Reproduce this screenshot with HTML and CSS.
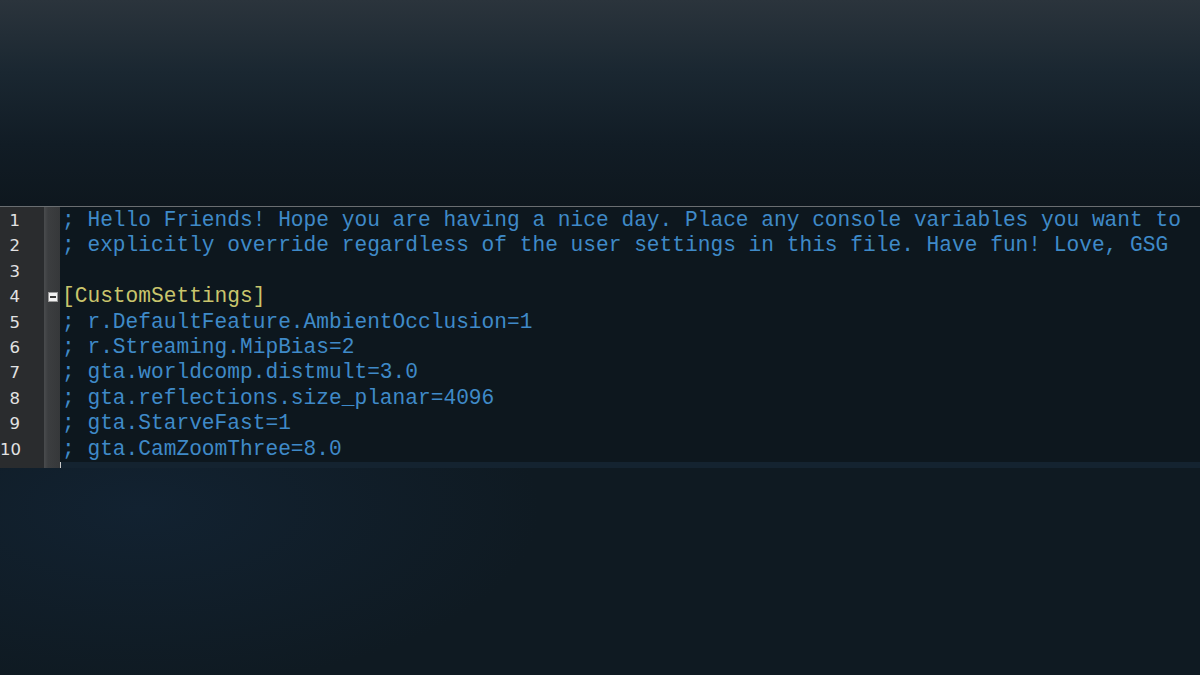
FILE: index.html
```html
<!DOCTYPE html>
<html lang="en">
<head>
    <meta charset="UTF-8">
    <meta name="viewport" content="width=device-width, initial-scale=1.0">
    <title>Custom Settings</title>
    <link rel="stylesheet" href="styles.css">
</head>
<body>

<div class="top"></div>

<div class="editor">
    <!-- Line numbers -->
    <div class="gutter">
        <div class="num">1</div>
        <div class="num">2</div>
        <div class="num">3</div>
        <div class="num">4</div>
        <div class="num">5</div>
        <div class="num">6</div>
        <div class="num">7</div>
        <div class="num">8</div>
        <div class="num">9</div>
        <div class="num">10</div>
    </div>

    <!-- Fold margin -->
    <div class="fold">
        <div class="fold-row"></div>
        <div class="fold-row"></div>
        <div class="fold-row"></div>
        <div class="fold-row"><span class="fold-box"></span></div>
    </div>

    <!-- Code -->
    <div class="code">
        <div class="line comment">; Hello Friends! Hope you are having a nice day. Place any console variables you want to</div>
        <div class="line comment">; explicitly override regardless of the user settings in this file. Have fun! Love, GSG</div>
        <div class="line"></div>
        <div class="line section">[CustomSettings]</div>
        <div class="line comment">; r.DefaultFeature.AmbientOcclusion=1</div>
        <div class="line comment">; r.Streaming.MipBias=2</div>
        <div class="line comment">; gta.worldcomp.distmult=3.0</div>
        <div class="line comment">; gta.reflections.size_planar=4096</div>
        <div class="line comment">; gta.StarveFast=1</div>
        <div class="line comment">; gta.CamZoomThree=8.0</div>
        <div class="end-tick"></div>
    </div>
</div>

<div class="bottom"></div>

</body>
</html>
```

FILE: styles.css
```css
/* Page */
body {
    margin: 0;
    background-color: #0f1a22;
    overflow: hidden;
}

/* Dark banner above the editor */
.top {
    height: 206px;
    background: linear-gradient(to bottom, #2b343c 0%, #1a2731 35%, #111c25 70%, #0e171e 100%);
    border-bottom: 1px solid #6a6e71;
}

/* Editor */
.editor {
    display: flex;
    height: 261px;
    background-color: #0d171e;
}

.gutter {
    width: 44px;
    padding-top: 1px;
    background-color: #2a2c2e;
    box-sizing: border-box;
    padding-right: 24px;
}

.num {
    height: 25.4px;
    line-height: 25.4px;
    text-align: right;
    font-family: "DejaVu Sans", Verdana, sans-serif;
    font-size: 16.5px;
    color: #e2e2e2;
}

.fold {
    width: 16px;
    padding-top: 1px;
    background: linear-gradient(to right, #4a4c4e 0px, #3c3e40 4px, #36383a 100%);
}

.fold-row {
    height: 25.4px;
    display: flex;
    align-items: center;
    justify-content: center;
}

/* Fold marker [-] */
.fold-box {
    position: relative;
    width: 10px;
    height: 10px;
    margin-left: 2px;
    background-color: #f2f2f2;
    box-sizing: border-box;
    border: 1px solid #9a9a9a;
}

.fold-box::after {
    content: "";
    position: absolute;
    left: 1px;
    right: 1px;
    top: 3px;
    height: 2px;
    background-color: #3a3a3a;
}

.code {
    position: relative;
    flex: 1;
    padding-top: 1px;
    padding-left: 2px;
    border-bottom: 6px solid #142330;
    font-family: "Liberation Mono", "Courier New", monospace;
    font-size: 21.2px;
}

.line {
    height: 25.4px;
    line-height: 25.4px;
    white-space: pre;
}

.comment {
    color: #3f8ac8;
}

.section {
    color: #c9c56c;
}

.end-tick {
    position: absolute;
    left: 0;
    bottom: -6px;
    width: 1px;
    height: 6px;
    background-color: #c8c8c8;
}

/* Area below the editor */
.bottom {
    height: 207px;
    background: radial-gradient(ellipse 400px 180px at 140px 40px, #122231 0%, #0f1a22 100%);
}
```
